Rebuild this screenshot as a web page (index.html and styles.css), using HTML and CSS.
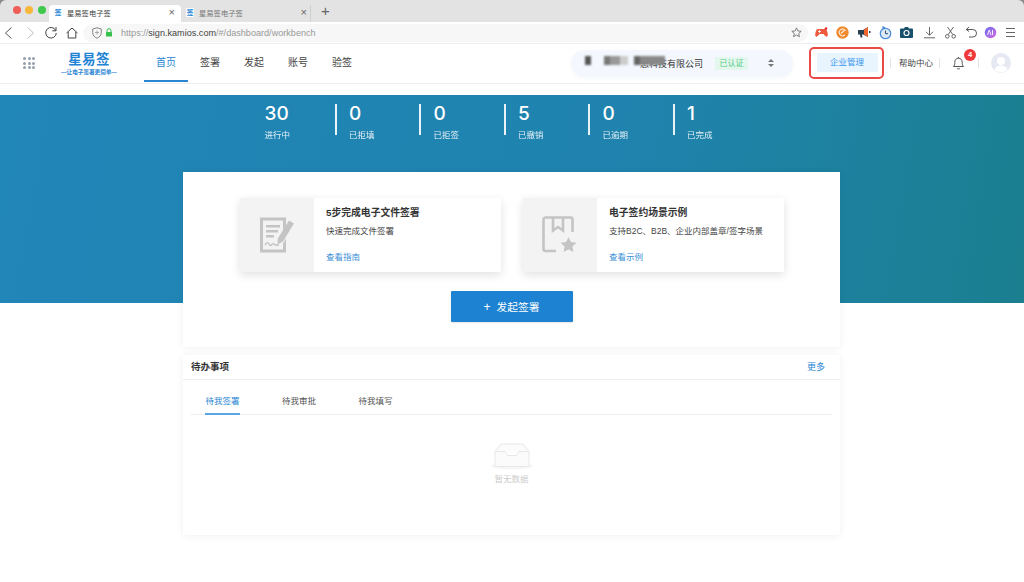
FILE: index.html
```html
<!DOCTYPE html>
<html lang="zh-CN">
<head>
<meta charset="utf-8">
<title>星易签电子签</title>
<link rel="stylesheet" href="styles.css">
</head>
<body>
<div class="tabbar">
  <div class="lights"><i class="light red"></i><i class="light amber"></i><i class="light green"></i></div>
  <div class="tab active"><span class="fav">签</span><span class="tab-title">星易签电子签</span><span class="tab-x">×</span></div>
  <div class="tab"><span class="fav boxed">签</span><span class="tab-title">星易签电子签</span><span class="tab-x">×</span></div>
  <span class="tab-plus">+</span>
</div>
<div class="toolbar">
  <svg class="tool" width="14" height="14" viewBox="0 0 14 14"><path d="M9.500 1.500 3.500 7l6 5.500" fill="none" stroke="#555" stroke-width="1"/></svg>
  <svg class="tool" width="14" height="14" viewBox="0 0 14 14"><path d="M4.500 1.500 10.500 7l-6 5.500" fill="none" stroke="#bbb" stroke-width="1"/></svg>
  <svg class="tool" width="14" height="14" viewBox="0 0 14 14"><path d="M11.800 4.500A5.300 5.300 0 1 0 12.300 7M12 1v3.800H8.300" fill="none" stroke="#444" stroke-width="1"/></svg>
  <svg class="tool" width="14" height="14" viewBox="0 0 14 14"><path d="M1.500 7 7 2l5.500 5M3.200 6v6h7.600V6" fill="none" stroke="#444" stroke-width="1"/></svg>
  <div class="urlbar">
    <svg width="10" height="12" viewBox="0 0 10 12"><path d="M5 .8 9.300 2v3.500c0 3-2 4.800-4.300 5.700C2.700 10.300.7 8.500.7 5.500V2z" fill="none" stroke="#777" stroke-width=".9"/><path d="M3 5.500h4M5 3.500v4" stroke="#999" stroke-width=".8"/></svg>
    <svg class="lock" width="8" height="9" viewBox="0 0 8 9"><path d="M2 4V2.700a2 2 0 0 1 4 0V4" fill="none" stroke="#35c04b" stroke-width="1"/><rect x="1" y="4" width="6" height="4.500" rx=".6" fill="#35c04b"/></svg>
    <span class="url">https://<b>sign.kamios.com</b>/#/dashboard/workbench</span>
    <svg class="star" width="11" height="11" viewBox="0 0 12 12"><path d="m6 1 1.500 3.300 3.600.4-2.700 2.400.8 3.500L6 8.800l-3.200 1.800.8-3.500L.9 4.700l3.600-.4z" fill="none" stroke="#666" stroke-width=".9"/></svg>
  </div>
  <div class="exts">
    <svg width="13" height="11" viewBox="0 0 13 11"><path d="M3 2h7c1.500 0 2.500 2 2.800 5.500.2 2.500-1.800 2.800-3 1L8.500 7h-4L3.200 8.500c-1.200 1.800-3.200 1.500-3-1C.5 4 1.500 2 3 2z" fill="#ee5a3b"/><circle cx="11" cy="1.500" r="1.300" fill="#e22"/><path d="M3 4.500h3M4.500 3v3" stroke="#fff" stroke-width=".8"/></svg>
    <svg width="13" height="13" viewBox="0 0 13 13"><circle cx="6.500" cy="6.500" r="6.200" fill="#f08a2e"/><path d="M9.500 4.500A3.500 3.500 0 1 0 9 9" fill="none" stroke="#fff" stroke-width="1"/><path d="M5 7.500 9 3.500" stroke="#fde3c8" stroke-width="1.400"/></svg>
    <svg width="13" height="11" viewBox="0 0 13 11"><path d="M0 3h5l5-3v10L5 7.500H4L4.500 10.500H2.500L2 7.500H0z" fill="#28404f"/><path d="M6 2.500 10 0v10L6 7.500z" fill="#f0662d"/><rect x="11" y="4" width="1.500" height="2" fill="#28404f"/></svg>
    <svg width="13" height="14" viewBox="0 0 13 14"><circle cx="6.500" cy="7.500" r="5.200" fill="#dfe9f6" stroke="#4d8fd6" stroke-width="1.300"/><path d="M6.500 4.500v3.200h2.500" fill="none" stroke="#2d4f72" stroke-width="1"/><path d="m3.500 0 3 1.500-3 1.800z" fill="#3b82d0"/></svg>
    <svg width="13" height="11" viewBox="0 0 13 11"><path d="M4 1.500 5 0h3l1 1.500h3a1 1 0 0 1 1 1V10a1 1 0 0 1-1 1H1a1 1 0 0 1-1-1V2.500a1 1 0 0 1 1-1z" fill="#17506c"/><circle cx="6.500" cy="6" r="2.500" fill="none" stroke="#fff" stroke-width="1.200"/></svg>
    <svg width="13" height="13" viewBox="0 0 13 13"><path d="M6.500 1v8M3 5.800 6.500 9.300 10 5.800M1 11.800h11" fill="none" stroke="#555" stroke-width=".9"/></svg>
    <svg width="13" height="13" viewBox="0 0 13 13"><path d="M3.500 1 8.800 8.500M9.500 1 4.200 8.500" fill="none" stroke="#555" stroke-width=".9"/><circle cx="3.300" cy="10.300" r="1.800" fill="none" stroke="#555" stroke-width=".9"/><circle cx="9.700" cy="10.300" r="1.800" fill="none" stroke="#555" stroke-width=".9"/></svg>
    <svg width="13" height="13" viewBox="0 0 13 13"><path d="M4 1 1.200 3.500 4 5.500M1.500 3.500h6.300a3.700 3.700 0 0 1 0 7.500H4" fill="none" stroke="#444" stroke-width=".9"/></svg>
    <svg width="13" height="13" viewBox="0 0 13 13"><defs><linearGradient id="ai" x1="0" y1="0" x2="1" y2="1"><stop offset="0" stop-color="#6a6cf0"/><stop offset="1" stop-color="#d66be0"/></linearGradient></defs><circle cx="6.500" cy="6.500" r="5.800" fill="url(#ai)"/><path d="M3.500 9 5.200 4 7 9M8.500 4v5" fill="none" stroke="#fff" stroke-width=".9"/></svg>
    <svg width="13" height="13" viewBox="0 0 13 13"><path d="M2 2.500h9M2 6.500h9M2 10.500h9" stroke="#666" stroke-width="1"/></svg>
  </div>
</div>

<header class="header">
  <div class="apps">
    <i></i><i></i><i></i><i></i><i></i><i></i><i></i><i></i><i></i>
  </div>
  <div class="logo">
    <span class="logo-name">星易签</span>
    <span class="logo-sub">—让电子签署更简单—</span>
  </div>
  <nav class="nav">
    <a class="nav-item current">首页</a>
    <a class="nav-item">签署</a>
    <a class="nav-item">发起</a>
    <a class="nav-item">账号</a>
    <a class="nav-item">验签</a>
  </nav>
  <div class="company">
    <span class="mosaic"><i class="m1"></i><i class="m2"></i><i class="m3"></i><i class="m4"></i><i class="m5"></i><i class="m6"></i></span>
    <span class="company-name">思科技有限公司</span>
    <span class="verified">已认证</span>
    <span class="updown"><i class="up"></i><i class="down"></i></span>
  </div>
  <div class="admin-box"><span class="admin-btn">企业管理</span></div>
  <a class="help">帮助中心</a>
  <div class="bell">
    <svg width="13" height="14" viewBox="0 0 13 14"><path d="M1.500 10.500c1-1 1.300-2 1.300-4.300C2.800 3.800 4.300 2.200 6.500 2.200s3.700 1.600 3.700 4c0 2.300.3 3.300 1.300 4.300zM5 12.300c.4.800 2.600.8 3 0M6.500 1v1.200" fill="none" stroke="#555" stroke-width="1"/></svg>
    <span class="badge">4</span>
  </div>
  <i class="sep"></i>
  <div class="avatar">
    <svg width="20" height="20" viewBox="0 0 20 20"><circle cx="10" cy="10" r="10" fill="#e6e9f2"/><circle cx="10" cy="8" r="4" fill="#fff"/><path d="M3.500 17c1-3.500 3.500-4.500 6.500-4.500s5.500 1 6.500 4.500a10 10 0 0 1-13 0z" fill="#fff"/></svg>
  </div>
</header>

<section class="hero">
  <div class="stats">
    <div class="stat"><strong>30</strong><span>进行中</span></div>
    <div class="stat"><strong>0</strong><span>已拒填</span></div>
    <div class="stat"><strong>0</strong><span>已拒签</span></div>
    <div class="stat"><strong>5</strong><span>已撤销</span></div>
    <div class="stat"><strong>0</strong><span>已逾期</span></div>
    <div class="stat"><strong>1</strong><span>已完成</span></div>
  </div>
</section>

<main class="main">
  <section class="panel start">
    <div class="features">
      <article class="feature">
        <div class="feature-img">
          <svg width="38" height="38" viewBox="0 0 38 38"><path d="M2 1.500h26v8.500L25 15V4.500H5v29h20v-6l3-5v14H2z" fill="#c4c4c4"/><path d="M8 9h14v2.500H8zM8 14h12v2.500H8zM8 19h8v2.500H8z" fill="#c4c4c4"/><path d="M31 4.500l5 3-11 18-5.500 3 .3-6z" fill="#c4c4c4"/><path d="M7 29c2-3 3-3 4-1s2 2 3 .5 2-1 3 .5h4" fill="none" stroke="#c4c4c4" stroke-width="1.400"/></svg>
        </div>
        <div class="feature-body">
          <h3>5步完成电子文件签署</h3>
          <p>快速完成文件签署</p>
          <a>查看指南</a>
        </div>
      </article>
      <article class="feature">
        <div class="feature-img">
          <svg width="38" height="38" viewBox="0 0 38 38"><path d="M15 35H4.500a2 2 0 0 1-2-2V3.500a2 2 0 0 1 2-2h25a2 2 0 0 1 2 2V16" fill="none" stroke="#c4c4c4" stroke-width="2.600"/><path d="M12 2v12.500l5-3.500 5 3.500V2" fill="none" stroke="#c4c4c4" stroke-width="2.600"/><path d="m27.500 21 2.400 5 5.500.7-4 3.800 1 5.500-4.900-2.700-4.900 2.700 1-5.500-4-3.800 5.500-.7z" fill="#c4c4c4"/></svg>
        </div>
        <div class="feature-body">
          <h3>电子签约场景示例</h3>
          <p>支持B2C、B2B、企业内部盖章/签字场景</p>
          <a>查看示例</a>
        </div>
      </article>
    </div>
    <button class="primary"><span class="plus">+</span>发起签署</button>
  </section>

  <section class="panel todo">
    <div class="todo-head"><h2>待办事项</h2><a>更多</a></div>
    <div class="tabs">
      <a class="todo-tab on">待我签署</a>
      <a class="todo-tab">待我审批</a>
      <a class="todo-tab">待我填写</a>
    </div>
    <div class="empty">
      <svg width="44" height="27" viewBox="0 0 44 27"><ellipse cx="22" cy="23" rx="21" ry="3.500" fill="#f6f6f6"/><path d="M11 1h22l6 7.500V22a1.500 1.500 0 0 1-1.500 1.500h-31A1.500 1.500 0 0 1 5 22V8.500z" fill="#fbfbfb" stroke="#e8e8e8"/><path d="M5 8.500h10c1 0 1 4 3 4h8c2 0 2-4 3-4h10" fill="#fff" stroke="#e8e8e8"/></svg>
      <span>暂无数据</span>
    </div>
  </section>
</main>
</body>
</html>
```
FILE: styles.css
```css
* { box-sizing: border-box; }
html, body { margin: 0; padding: 0; }
body {
  width: 1024px;
  height: 582px;
  overflow: hidden;
  background: linear-gradient(#8a8a8a 0 6px, #fff 6px);
  color: #333;
  font-family: "Liberation Sans", "Noto Sans CJK SC", sans-serif;
  font-size: 9px;
}
a { cursor: pointer; }

.tabbar {
  height: 22px;
  background: #e3e3e3;
  display: flex;
  align-items: flex-end;
  border-radius: 6px 6px 0 0;
}
.lights { width: 49px; height: 22px; display: flex; gap: 4.500px; padding: 6px 0 0 12.500px; }
.light { width: 8px; height: 8px; border-radius: 50%; }
.red { background: #ee5f57; }
.amber { background: #f6b73c; }
.green { background: #3fc84c; }
.tab {
  width: 132px;
  height: 17px;
  display: flex;
  align-items: center;
  padding: 0 6px 2px 5px;
  font-size: 7.300px;
  color: #777;
  border-right: 1px solid #d0d0d0;
}
.tab + .tab { width: 130px; padding-right: 3px; }
.tab.active { background: #fff; color: #444; border-right: 0; border-radius: 4px 4px 0 0; }
.fav {
  width: 8px;
  height: 9px;
  margin-right: 5px;
  flex: none;
  font-size: 7px;
  line-height: 9px;
  text-align: center;
  font-weight: 700;
  color: #2f8bd8;
}
.fav.boxed { background: #fff; }
.tab-title { flex: 1; }
.tab-x { font-size: 11px; color: #666; line-height: 1; }
.tab-plus { width: 29px; height: 20px; text-align: center; font-size: 15px; line-height: 18px; color: #666; }

.toolbar {
  height: 22px;
  background: #fff;
  border-bottom: 1px solid #eee;
  display: flex;
  align-items: center;
  padding-left: 2px;
}
.tool { margin-right: 7px; flex: none; }
.urlbar {
  width: 725px;
  height: 18px;
  margin-left: -3px;
  background: #f7f7f7;
  border-radius: 9px;
  display: flex;
  align-items: center;
  padding: 0 6px 0 9px;
  font-size: 9px;
}
.lock { margin-left: 3px; }
.url { margin-left: 8px; flex: 1; color: #999; font-size: 9.100px; }
.url b { font-weight: 400; color: #444; }
.exts { display: flex; align-items: center; gap: 8px; margin-left: 6.500px; }
.exts svg:nth-child(3), .exts svg:nth-child(6) { margin-left: 1.500px; }
.exts svg:nth-child(9) { margin-left: -2px; }
.exts svg:nth-child(10) { margin-left: -1px; }

.header {
  height: 40px;
  background: #fff;
  border-bottom: 1px solid #eee;
  display: flex;
  align-items: center;
}
.apps {
  margin-left: 23px;
  margin-bottom: 1px;
  width: 12px;
  display: grid;
  grid-template-columns: repeat(3, 3px);
  justify-content: space-between;
  row-gap: 1.500px;
}
.apps i { height: 3px; background: #94a0ab; border-radius: 50%; }
.logo {
  margin-left: 24px;
  width: 60px;
  display: flex;
  flex-direction: column;
  align-items: center;
  line-height: 1;
  color: #1f84d4;
}
.logo-name { font-size: 13.500px; font-weight: 700; line-height: 16px; letter-spacing: .3px; }
.logo-sub { font-size: 5.600px; font-weight: 700; line-height: 7px; margin-top: 1px; white-space: nowrap; }
.nav { display: flex; margin-left: 25px; height: 38px; align-self: flex-start; }
.nav-item {
  width: 44px;
  display: flex;
  align-items: center;
  justify-content: center;
  font-size: 10px;
  color: #444;
  padding-bottom: 2px;
  border-bottom: 2px solid transparent;
}
.nav-item.current { color: #2a86d2; border-bottom-color: #2a86d2; }

.company {
  margin-left: 207px;
  margin-bottom: 1px;
  width: 222px;
  height: 27px;
  border-radius: 14px;
  background: #f4f8fe;
  box-shadow: 0 1px 4px rgba(60, 100, 160, .05);
  display: flex;
  align-items: center;
  padding-left: 14px;
  font-size: 9px;
  color: #333;
}
.mosaic { display: flex; align-items: flex-start; width: 55px; height: 14px; filter: blur(.8px); position: relative; z-index: 1; }
.mosaic i { display: block; height: 9px; flex: none; }
.m1 { width: 6px; background: #555; margin-right: 13px; }
.m2 { width: 6px; background: #777; }
.m3 { width: 10px; background: #999; }
.m4 { width: 8px; background: #ccc; margin-right: 6px; }
.m5 { width: 6px; background: #666; }
.m6 { width: 25px; background: #888; }
.company-name { white-space: nowrap; }
.verified {
  margin-left: 12px;
  width: 33px;
  height: 13px;
  background: #e3f7ec;
  color: #4ecb87;
  border-radius: 1.500px;
  font-size: 8px;
  line-height: 13px;
  text-align: center;
}
.updown { margin-left: 20px; display: flex; flex-direction: column; gap: 1.500px; }
.updown i { width: 0; height: 0; border-left: 3.500px solid transparent; border-right: 3.500px solid transparent; }
.up { border-bottom: 3.500px solid #777; }
.down { border-top: 3.500px solid #777; }

.admin-box {
  margin-left: 16px;
  margin-bottom: 2px;
  width: 75px;
  height: 32px;
  border: 2px solid #ea4a46;
  border-radius: 5px;
  display: flex;
  align-items: center;
  justify-content: center;
}
.admin-btn {
  width: 61px;
  height: 19px;
  margin-left: 1px;
  background: #e8f4fe;
  color: #3a97ee;
  font-size: 8.500px;
  line-height: 19px;
  text-align: center;
  border-radius: 1px;
}
.help {
  margin: 0 0 2px 6px;
  padding: 0 6px 0 8px;
  font-size: 8.500px;
  line-height: 10px;
  color: #444;
  white-space: nowrap;
  border-left: 1px solid #e4e4e4;
  border-right: 1px solid #e4e4e4;
}
.bell { position: relative; margin: 0 0 2px 12px; width: 13px; height: 14px; }
.badge {
  position: absolute;
  left: 12px;
  top: -7px;
  width: 12px;
  height: 12px;
  border-radius: 50%;
  background: #f0393b;
  color: #fff;
  font-size: 7.500px;
  font-weight: 700;
  line-height: 12px;
  text-align: center;
}
.sep { width: 1px; height: 10px; margin: 0 0 2px 13px; background: #e4e4e4; }
.avatar { margin: 0 0 1px 12px; width: 20px; height: 20px; }

.hero {
  margin-top: 11px;
  height: 208px;
  background: linear-gradient(100deg, #2186b8 0%, #1f83ae 60%, #1b7f90 100%);
  padding: 9px 0 0 250px;
}
.stats { display: flex; }
.stat {
  width: 84.500px;
  height: 31px;
  padding-left: 12.500px;
  display: flex;
  flex-direction: column;
  color: #fff;
  border-left: 2px solid rgba(255, 255, 255, .9);
}
.stat:first-child { border-left-color: transparent; }
.stat strong { font-family: Inter, "Liberation Sans", sans-serif; font-size: 19px; font-weight: 500; line-height: 19px; }
.stat span { font-size: 8.500px; line-height: 12px; margin-top: 6px; opacity: .88; white-space: nowrap; }

.main { margin: -131px 0 0 183px; width: 657px; display: flex; flex-direction: column; gap: 8px; }
.panel { background: #fff; box-shadow: 0 1px 8px rgba(0, 0, 0, .06); }
.start { height: 175px; padding-top: 26px; display: flex; flex-direction: column; align-items: center; }
.features { display: flex; gap: 22px; margin-left: 1px; }
.feature {
  width: 261px;
  height: 74px;
  display: flex;
  background: #fff;
  box-shadow: 0 3px 10px rgba(0, 0, 0, .12);
  border-radius: 1px;
}
.feature-img { width: 74px; background: #f3f3f3; display: flex; align-items: center; justify-content: center; }
.feature-body { flex: 1; padding: 8px 0 0 12px; display: flex; flex-direction: column; }
.feature-body h3 { margin: 0; font-size: 9.800px; font-weight: 700; line-height: 13px; color: #333; }
.feature-body p { margin: 6px 0 0; font-size: 8.500px; line-height: 13px; color: #444; white-space: nowrap; }
.feature-body a { margin-top: 13px; font-size: 8.500px; line-height: 13px; color: #3b8ed6; }
.primary {
  margin-top: 19px;
  width: 122px;
  height: 31px;
  border: 0;
  border-radius: 1px;
  background: #1e82d2;
  color: #fff;
  font: inherit;
  font-size: 10.750px;
  display: flex;
  align-items: center;
  justify-content: center;
  box-shadow: 0 1px 2px rgba(0, 0, 0, .1);
}
.plus { font-size: 12px; font-weight: 400; margin-right: 6px; line-height: 1; }

.todo { height: 180px; display: flex; flex-direction: column; }
.todo-head {
  height: 25px;
  flex: none;
  padding: 0 15px 2px 8px;
  border-bottom: 1px solid #eee;
  display: flex;
  align-items: center;
  justify-content: space-between;
}
.todo-head h2 { margin: 0; font-size: 9.500px; font-weight: 700; color: #333; }
.todo-head a { font-size: 9px; color: #2a86d2; }
.tabs {
  margin: 0 8px;
  height: 35px;
  flex: none;
  border-bottom: 1px solid #eee;
  display: flex;
  padding-left: 14px;
  gap: 41.500px;
}
.todo-tab {
  width: 35px;
  height: 35px;
  font-size: 8.500px;
  line-height: 42px;
  color: #555;
  text-align: center;
  white-space: nowrap;
}
.todo-tab.on { color: #2a86d2; border-bottom: 2px solid #5aa5e3; }
.empty {
  flex: 1;
  display: flex;
  flex-direction: column;
  align-items: center;
  padding-top: 28px;
  color: #ccc;
  font-size: 8.500px;
  line-height: 12px;
}
.empty span { margin-top: 3px; }
```
